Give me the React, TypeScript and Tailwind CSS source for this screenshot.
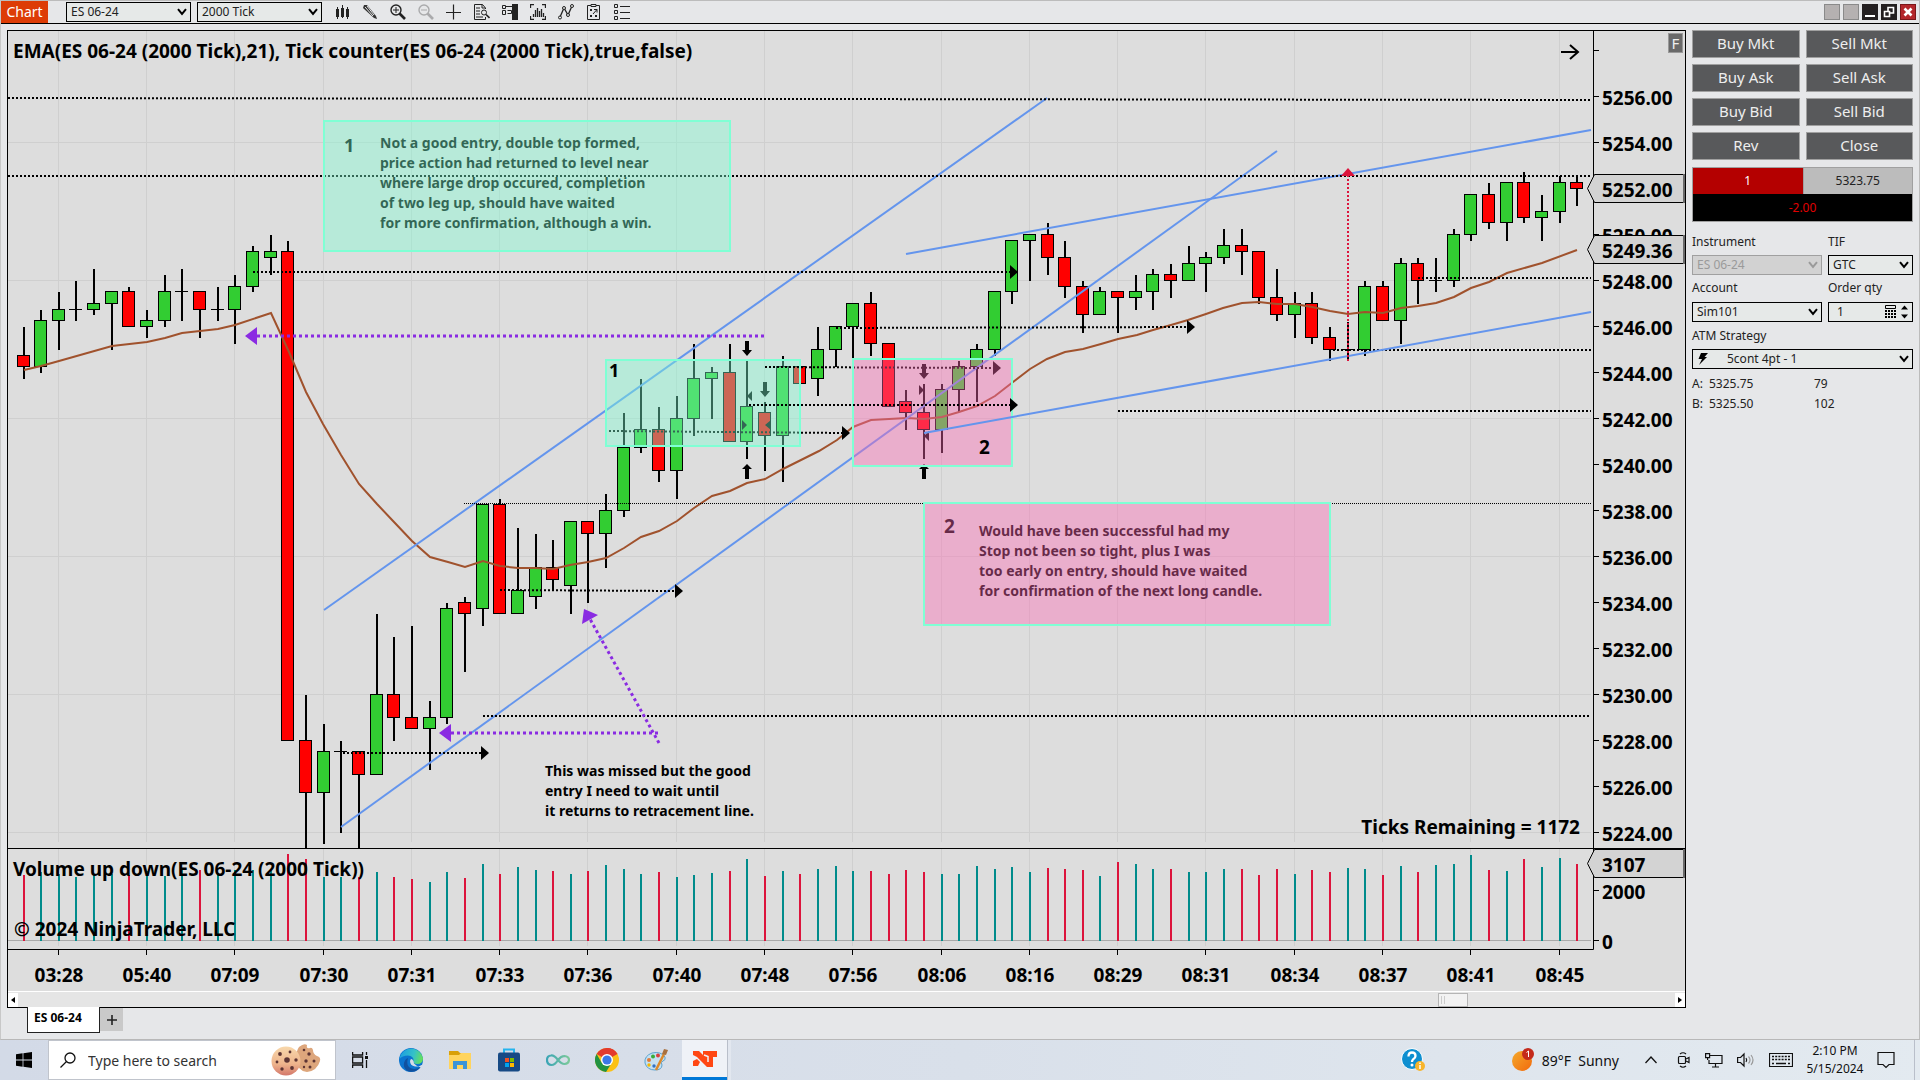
import React from "react";

type Candle = ["g" | "r" | "d", number, number, number, number];

// kind, body top, body bottom, high, low
const CANDLES: Candle[] = [
  ["r", 355, 367, 327, 379], ["g", 320, 367, 310, 373], ["g", 309, 321, 292, 350], ["d", 309, 310, 281, 321],
  ["g", 303, 310, 269, 315], ["g", 291, 304, 291, 350], ["r", 291, 327, 287, 327], ["g", 320, 327, 310, 338],
  ["g", 291, 321, 275, 327], ["d", 291, 292, 269, 321], ["r", 291, 310, 291, 338], ["d", 309, 310, 287, 321],
  ["g", 286, 310, 275, 344], ["g", 251, 287, 246, 292], ["g", 251, 258, 235, 275], ["r", 251, 741, 241, 741],
  ["r", 740, 793, 695, 848], ["g", 751, 793, 724, 844], ["d", 751, 752, 741, 833], ["r", 751, 775, 751, 848],
  ["g", 694, 775, 614, 775], ["r", 694, 718, 637, 741], ["r", 717, 729, 626, 729], ["g", 717, 729, 701, 770],
  ["g", 608, 718, 603, 724], ["r", 602, 614, 597, 672], ["g", 504, 609, 504, 626], ["r", 504, 614, 499, 614],
  ["g", 590, 614, 528, 614], ["g", 567, 597, 534, 609], ["r", 567, 580, 540, 591], ["g", 521, 586, 521, 614],
  ["r", 521, 534, 521, 603], ["g", 510, 534, 494, 568], ["g", 447, 511, 413, 517], ["g", 429, 448, 379, 453],
  ["r", 429, 471, 407, 482], ["g", 418, 471, 396, 499], ["g", 378, 419, 344, 436], ["g", 372, 379, 367, 419],
  ["r", 372, 442, 344, 442], ["g", 406, 442, 361, 459], ["r", 412, 436, 402, 471], ["g", 366, 436, 356, 482],
  ["r", 366, 384, 366, 384], ["g", 349, 379, 327, 396], ["g", 326, 350, 326, 367], ["g", 303, 327, 303, 358],
  ["r", 303, 344, 292, 356], ["r", 343, 407, 343, 407], ["r", 401, 413, 390, 430], ["r", 412, 430, 384, 459],
  ["g", 389, 430, 384, 453], ["g", 366, 390, 361, 412], ["g", 349, 367, 344, 402], ["g", 291, 350, 291, 356],
  ["g", 240, 292, 240, 304], ["g", 234, 241, 234, 281], ["r", 234, 258, 223, 275], ["r", 257, 287, 241, 298],
  ["r", 286, 315, 281, 333], ["g", 291, 315, 287, 315], ["r", 291, 298, 291, 333], ["g", 291, 298, 275, 310],
  ["g", 274, 292, 269, 310], ["r", 274, 281, 264, 298], ["g", 263, 281, 246, 281], ["g", 257, 264, 252, 292],
  ["g", 245, 258, 229, 264], ["r", 245, 252, 229, 275], ["r", 251, 298, 251, 304], ["r", 297, 315, 269, 321],
  ["g", 303, 315, 292, 338], ["r", 303, 338, 292, 344], ["r", 337, 350, 327, 361], ["d", 349, 350, 322, 361],
  ["g", 286, 350, 281, 356], ["r", 286, 321, 281, 321], ["g", 263, 321, 258, 344], ["r", 263, 281, 258, 304],
  ["d", 280, 281, 258, 292], ["g", 234, 281, 229, 287], ["g", 194, 235, 194, 241], ["r", 194, 223, 183, 229],
  ["g", 182, 223, 182, 241], ["r", 182, 218, 172, 223], ["g", 211, 218, 195, 241], ["g", 182, 212, 176, 223],
  ["r", 182, 189, 177, 206],
];

const VOLUME_DOWN = new Set([
  0, 6, 10, 15, 16, 19, 21, 22, 25, 27, 30, 32, 36, 40, 42, 44, 48, 49, 50, 51, 58, 59, 60, 62, 65, 69, 70, 71, 73, 74,
  77, 79, 83, 85, 88,
]);
const VOLUME = [
  875, 872, 874, 877, 874, 874, 875, 871, 876, 870, 870, 873, 870, 870, 870, 854, 859, 877, 877, 877, 872, 877, 879,
  882, 872, 878, 864, 874, 867, 870, 871, 874, 871, 865, 869, 874, 872, 877, 875, 873, 871, 859, 876, 871, 874, 869,
  866, 871, 871, 874, 870, 872, 874, 874, 866, 869, 867, 872, 868, 869, 870, 876, 862, 864, 869, 869, 872, 872, 869,
  869, 875, 869, 874, 870, 872, 868, 869, 875, 866, 872, 865, 864, 855, 870, 871, 859, 867, 858, 864,
];

const EMA =
  "24,370 41,366 59,361 112,346 147,342 165,338 182,333 200,331 218,329 235,325 271,313 289,352 306,392 323,424 341,455 359,484 377,504 394,522 412,541 430,557 448,562 465,567 483,561 500,566 518,568 535,568 553,569 570,565 588,562 606,558 624,548 641,537 659,531 677,521 694,508 712,496 730,491 747,483 765,479 783,469 801,460 819,451 837,440 853,427 871,420 889,419 907,418 924,419 942,417 959,412 977,406 995,396 1013,382 1030,369 1047,359 1065,352 1083,349 1101,344 1118,339 1137,335 1153,330 1171,325 1188,320 1206,314 1223,308 1242,303 1259,302 1277,304 1295,304 1312,307 1330,311 1348,314 1365,312 1383,313 1401,308 1418,306 1436,303 1454,297 1471,288 1489,282 1507,273 1542,263 1577,250";

const TIMES = [
  "03:28", "05:40", "07:09", "07:30", "07:31", "07:33", "07:36", "07:40", "07:48", "07:56", "08:06", "08:16", "08:29",
  "08:31", "08:34", "08:37", "08:41", "08:45",
];

const barX = (i: number) => Math.floor(58.33 + 17.655 * (i - 2));
const priceY = (p: number) => 96 + 23 * (5256 - p);
const PRICES = Array.from({ length: 17 }, (_, k) => 5256 - 2 * k);

function Dotted({ x1, y1, x2, y2, arrow = false }: { x1: number; y1: number; x2: number; y2: number; arrow?: boolean }) {
  return (
    <g>
      <line x1={x1} y1={y1} x2={arrow ? x2 - 8 : x2} y2={y2} stroke="#000" strokeWidth="2" strokeDasharray="2 2" />
      {arrow && <polygon points={`${x2 - 8},${y2 - 7} ${x2},${y2} ${x2 - 8},${y2 + 7}`} />}
    </g>
  );
}

function TextLines({ x, y, lines, fill = "#000" }: { x: number; y: number; lines: string[]; fill?: string }) {
  return (
    <text fill={fill} className="text-[14px]">
      {lines.map((l, k) => (
        <tspan key={l} x={x} y={y + k * 20}>
          {l}
        </tspan>
      ))}
    </text>
  );
}

function AxisMarker({ y, label }: { y: number; label: string }) {
  return (
    <g>
      <path d={`M1594.5 ${y + 0.5}H1684V${y + 28.5}H1594.5L1587.5 ${y + 14.5}Z`} fill="#d3d3d3" stroke="#000" />
      <path d={`M1684 ${y}V${y + 29}`} stroke="#696969" strokeWidth="2" />
      <text x="1602" y={y + 23}>
        {label}
      </text>
    </g>
  );
}

function DownArrow({ x, y }: { x: number; y: number }) {
  return <path d={`M${x - 2} ${y}h4v9h3l-5 6l-5 -6h3z`} />;
}
function UpArrow({ x, y }: { x: number; y: number }) {
  return <path d={`M${x} ${y}l5 5h-3v10h-4v-10h-3z`} />;
}

function PriceChart() {
  return (
    <svg
      viewBox="8 31 1677 960"
      className="block h-auto w-full bg-[#dddddd] font-['Noto_Sans','Open_Sans',sans-serif] text-[19px] font-bold"
      role="img"
      aria-label="ES 06-24 2000 tick price chart"
    >
      {/* grid */}
      <g stroke="#cfcfcf">
        {[142, 280, 418, 556, 694, 832].map((y) => (
          <path key={y} d={`M8 ${y + 0.5}H1591`} />
        ))}
        {TIMES.map((t, k) => (
          <path key={t} d={`M${barX(2 + 5 * k) + 0.5} 31V842M${barX(2 + 5 * k) + 0.5} 849V946`} />
        ))}
      </g>
      <path d="M8 940.5H1591" stroke="#a9a9a9" />

      {/* volume bars */}
      {VOLUME.map((y, i) => (
        <rect key={i} x={barX(i)} y={y} width="2" height={941 - y} fill={VOLUME_DOWN.has(i) ? "#dc143c" : "#008b8b"} />
      ))}

      {/* candles */}
      {CANDLES.map(([k, top, bottom, high, low], i) => {
        const x = barX(i);
        return (
          <g key={i}>
            <rect x={x} y={high} width="2" height={low - high} />
            {k === "d" ? (
              <rect x={x - 6} y={top} width="13" height="1" />
            ) : (
              <rect
                x={x - 5.5}
                y={top + 0.5}
                width="12"
                height={bottom - top - 1}
                fill={k === "g" ? "#32cd32" : "#ff0000"}
                stroke="#000"
              />
            )}
          </g>
        );
      })}
      <polyline points={EMA} fill="none" stroke="#a0522d" strokeWidth="2" />

      {/* trend channels below the shaded zones */}
      <g stroke="#6495ed" strokeWidth="2">
        <path d="M324 610L1047 98" />
        <path d="M341 827L1277 151" />
        <path d="M906 254L1591 130" />
      </g>

      <Dotted x1={8} y1={98} x2={1591} y2={100} />
      <Dotted x1={8} y1={176} x2={1591} y2={176} />
      <Dotted x1={253} y1={272} x2={1018} y2={272} arrow />
      <Dotted x1={836} y1={328} x2={1195} y2={327} arrow />
      <Dotted x1={765} y1={367} x2={1001} y2={368} arrow />
      <Dotted x1={609} y1={431} x2={850} y2={433} arrow />
      <Dotted x1={500} y1={590} x2={683} y2={591} arrow />
      <Dotted x1={483} y1={716} x2={1591} y2={716} />
      <Dotted x1={343} y1={753} x2={489} y2={753} arrow />
      <Dotted x1={1418} y1={278} x2={1591} y2={278} />
      <Dotted x1={1333} y1={350} x2={1591} y2={350} />
      <Dotted x1={1118} y1={411} x2={1591} y2={411} />
      <path d="M464 503.5H1591" stroke="#000" strokeDasharray="1 1" />

      {/* order fills */}
      <DownArrow x={747} y={341} />
      <DownArrow x={765} y={382} />
      <DownArrow x={924} y={364} />
      <UpArrow x={747} y={464} />
      <UpArrow x={924} y={464} />
      <path d="M752 391v10l-5 -5zM742 420v10l5 -5zM771 420v10l-6 -5zM919 385v10l5 -5zM929 431v10l-5 -5z" />

      {/* notes */}
      <TextLines
        x={380}
        y={148}
        lines={[
          "Not a good entry, double top formed,",
          "price action had returned to level near",
          "where large drop occured, completion",
          "of two leg up, should have waited",
          "for more confirmation, although a win.",
        ]}
      />
      <text x="344" y="152" className="text-[18px]">1</text>
      <TextLines
        x={979}
        y={536}
        lines={[
          "Would have been successful had my",
          "Stop not been so tight, plus I was",
          "too early on entry, should have waited",
          "for confirmation of the next long candle.",
        ]}
      />
      <text x="944" y="533">2</text>
      <TextLines
        x={545}
        y={776}
        lines={["This was missed but the good", "entry I need to wait until", "it returns to retracement line."]}
      />
      <g stroke="#7fffd4" strokeWidth="2" fillOpacity="0.4">
        <rect x="324" y="121" width="406" height="130" fill="#7fffd4" />
        <rect x="606" y="360" width="194" height="86" fill="#7fffd4" />
        <rect x="853" y="359" width="159" height="107" fill="#ff69b4" />
        <rect x="924" y="503" width="406" height="122" fill="#ff69b4" />
      </g>
      <Dotted x1={749} y1={405} x2={1018} y2={405} arrow />
      <path d="M765 367H800" stroke="#000" strokeWidth="2" strokeDasharray="2 2" />
      <path d="M924 433L1591 312" stroke="#6495ed" strokeWidth="2" />
      <text x="609" y="377" className="text-[18px]">1</text>
      <text x="979" y="454">2</text>

      {/* hand-drawn markers */}
      <g stroke="#8a2be2" strokeWidth="3" strokeDasharray="3 3">
        <path d="M764 336H257" />
        <path d="M658 733H451" />
        <path d="M659 743L590 619" />
      </g>
      <g fill="#8a2be2">
        <polygon points="245,336 257,327 257,345" />
        <polygon points="439,733 451,724 451,742" />
        <polygon points="584,609 598,615 582,624" />
      </g>
      <path d="M1348 361V176" stroke="#dc143c" strokeWidth="2" strokeDasharray="2 2" />
      <polygon points="1341,176 1348,168 1355,176" fill="#dc143c" />

      {/* frames and axes */}
      <path d="M1593.5 31V949.5H8M8 848.5H1685" fill="none" stroke="#000" />
      <path
        d={
          "M1594 50.5h5M1594 890.5h5M1594 940.5h5" +
          PRICES.map((p) => `M1594 ${priceY(p) + 0.5}h5`).join("") +
          TIMES.map((_, k) => `M${barX(2 + 5 * k) + 0.5} 950v5`).join("")
        }
        stroke="#000"
      />
      {PRICES.filter((p) => p !== 5252).map((p) => (
        <text key={p} x="1602" y={priceY(p) + 9}>
          {p.toFixed(2)}
        </text>
      ))}
      <text x="1602" y="899">2000</text>
      <text x="1602" y="949">0</text>
      <AxisMarker y={174} label="5252.00" />
      <AxisMarker y={235} label="5249.36" />
      <AxisMarker y={849} label="3107" />
      <g textAnchor="middle">
        {TIMES.map((t, k) => (
          <text key={t} x={barX(2 + 5 * k) + 1} y="982">
            {t}
          </text>
        ))}
      </g>

      <text x="13" y="58">EMA(ES 06-24 (2000 Tick),21), Tick counter(ES 06-24 (2000 Tick),true,false)</text>
      <text x="13" y="876">Volume up down(ES 06-24 (2000 Tick))</text>
      <text x="14" y="936">© 2024 NinjaTrader, LLC</text>
      <text x="1580" y="834" textAnchor="end">Ticks Remaining = 1172</text>
      <path d="M1561 52H1577M1570 45L1578 52L1570 59" fill="none" stroke="#000" strokeWidth="2" />
      <rect x="1668.5" y="33.5" width="14" height="19" fill="#696969" stroke="#999" />
      <text x="1675.5" y="49" textAnchor="middle" fill="#eee" className="text-[15px] font-normal">F</text>
    </svg>
  );
}

function Chevron({ color = "#000" }: { color?: string }) {
  return (
    <svg viewBox="0 0 10 8" className="pointer-events-none absolute right-1 top-1/2 h-2 w-2.5 -translate-y-1/2" aria-hidden>
      <path d="M1 1.2L5 6L9 1.2" fill="none" stroke={color} strokeWidth="2" />
    </svg>
  );
}

function Select({ id, value, label, disabled = false, inset = "pl-1" }: { id: string; value: string; label?: string; disabled?: boolean; inset?: string }) {
  return (
    <div className="relative w-full">
      <select
        id={id}
        aria-label={label}
        disabled={disabled}
        className={`block w-full appearance-none rounded-none border text-[12px] leading-[18px] ${inset} ${
          disabled ? "border-[#a0a0a0] bg-[#d2d2d2] text-[#9a9a9a] opacity-100" : "border-black bg-[#e6e9e8] text-[#222]"
        }`}
      >
        <option>{value}</option>
      </select>
      <Chevron color={disabled ? "#9a9a9a" : "#000"} />
    </div>
  );
}

const TOOLS: { name: string; art: React.ReactNode; dim?: boolean }[] = [
  { name: "Chart style", art: <path d="M3.5 3v12M8.5 1v13M13.5 3v12" stroke="#222" strokeWidth="1" fill="none" /> },
  { name: "Drawing tools", art: <><path d="M2 1L5 1L14 12L15 15L12 14L1 4Z" fill="#333" /><path d="M3 3L11 12M5 2L12 11" stroke="#e6e7e8" /></> },
  { name: "Zoom in", art: <><circle cx="6" cy="6" r="5" fill="none" stroke="#222" strokeWidth="1.4" /><path d="M3 6h6M6 3v6" stroke="#222" /><path d="M9.5 9.5L15 15" stroke="#222" strokeWidth="2.6" /></> },
  { name: "Zoom out", dim: true, art: <><circle cx="6" cy="6" r="5" fill="none" stroke="#222" strokeWidth="1.4" /><path d="M3 6h6" stroke="#222" /><path d="M9.5 9.5L15 15" stroke="#222" strokeWidth="2.6" /></> },
  { name: "Cross hair", art: <path d="M7.5 0.5v15M0 8.5h15" stroke="#222" strokeWidth="1.2" /> },
  { name: "Data box", art: <><path d="M11.5 5V4L8.5 0.5H0.5V15.5H11.5V13M8 0.5V4H11" fill="none" stroke="#222" /><path d="M2 4h4M2 7h4M2 10h4M2 13h7" stroke="#222" /><circle cx="10" cy="8.5" r="2.5" fill="none" stroke="#222" /><path d="M12 10.5L15.5 14" stroke="#222" strokeWidth="1.6" /></> },
  { name: "Chart trader", art: <><path d="M10 0h6v16h-6z" fill="#222" /><path d="M0.5 1.5h3v3h-3zM4 2.5h6M5.5 6.5h4v3h-4M0.5 6.5h3v4h-3z" fill="none" stroke="#222" /></> },
  { name: "Indicators", art: <path d="M4 0.5H0.5V4M12 0.5H15.5V4M0.5 12V15.5H4M15.5 12V15.5H12M3.5 13V10M5.5 13V6M7.5 13V4M9.5 13V7M11.5 13V5M13.5 13V9" fill="none" stroke="#222" strokeWidth="1.3" /> },
  { name: "Strategies", art: <><path d="M2 13L6 4L10 11L14 2" fill="none" stroke="#222" strokeWidth="1.3" /><g fill="#e6e7e8" stroke="#222"><circle cx="2" cy="13.5" r="1.5" /><circle cx="6" cy="4" r="1.5" /><circle cx="10" cy="11" r="1.5" /><circle cx="14" cy="2" r="1.5" /></g></> },
  { name: "Properties", art: <><path d="M1.5 1.5h12v14h-12z" fill="none" stroke="#222" /><path d="M5 0.5h5v2H5z" fill="#e6e7e8" stroke="#222" /><path d="M4 5l2 2M6 5l-2 2M8 5.5h3v3M11 5.5L7 10M4 11l2 2M6 11l-2 2M9 11l2 2M11 11l-2 2" fill="none" stroke="#222" /></> },
  { name: "List", art: <><path d="M0.5 0.5h3v3h-3zM0.5 6.5h3v3h-3zM0.5 12.5h3v3h-3z" fill="none" stroke="#222" /><path d="M6 2.5h10M6 8.5h10M6 14.5h10" stroke="#222" /></> },
];

function Toolbar() {
  return (
    <header className="flex h-[23px] items-center border-b border-black">
      <button className="h-[22px] w-[47px] bg-[#dd3c06] text-[14px] leading-[20px] text-white">Chart</button>
      <div className="ml-[18px] w-[125px]">
        <Select id="bar-instrument" label="Chart instrument" value="ES 06-24" />
      </div>
      <div className="ml-1.5 w-[125px]">
        <Select id="bar-interval" label="Interval" value="2000 Tick" />
      </div>
      <div className="ml-3 flex gap-3">
        {TOOLS.map((t, i) => (
          <button key={t.name} aria-label={t.name} className={t.dim ? "opacity-30" : ""}>
            <svg viewBox="0 0 16 16" className="h-4 w-4">
              {t.art}
              {i === 0 && <path d="M2 5h3v8H2zM7 4h3v9H7zM12 5h3v8h-3z" fill="#222" />}
            </svg>
          </button>
        ))}
      </div>
      <div className="ml-auto mr-[3px] flex gap-[3px]">
        <button aria-label="Link instrument" className="h-4 w-4 border border-[#8a8a8a] bg-[#b5b1b1]" />
        <button aria-label="Link interval" className="h-4 w-4 border border-[#8a8a8a] bg-[#b5b1b1]" />
        <button aria-label="Minimize" className="h-4 w-4 bg-[#231f20]">
          <svg viewBox="0 0 16 16"><path d="M3 12h10" stroke="#fff" strokeWidth="2" /></svg>
        </button>
        <button aria-label="Restore" className="h-4 w-4 bg-[#231f20]">
          <svg viewBox="0 0 16 16"><path d="M3.5 7.5h5v5h-5zM7 7V3.5h5.5V9H9" fill="none" stroke="#fff" strokeWidth="1.6" /></svg>
        </button>
        <button aria-label="Close window" className="h-4 w-4 border border-[#7a1518] bg-[#b3262b]">
          <svg viewBox="0 0 14 14"><path d="M3.5 3.5l7 7M10.5 3.5l-7 7" stroke="#fff" strokeWidth="2.6" /></svg>
        </button>
      </div>
    </header>
  );
}

function TraderPanel() {
  return (
    <aside className="w-[221px] shrink-0 text-[12px] leading-4 text-[#222]">
      <div className="grid grid-cols-2 gap-1.5">
        {["Buy Mkt", "Sell Mkt", "Buy Ask", "Sell Ask", "Buy Bid", "Sell Bid", "Rev", "Close"].map((b) => (
          <button key={b} className="h-7 border border-[#a0a0a0] bg-[#58595b] pb-0.5 text-[15px] leading-6 text-[#eee]">
            {b}
          </button>
        ))}
      </div>
      <div className="mt-[7px] border border-[#a0a0a0] text-center">
        <div className="grid grid-cols-2 leading-[26px]">
          <div className="bg-[#b40000] text-white">1</div>
          <div className="border-l border-[#a0a0a0] bg-[#bcbcbc]">5323.75</div>
        </div>
        <div className="bg-black leading-[27px] text-[#e00000]">-2.00</div>
      </div>
      <form className="mt-3 grid grid-cols-[130px_1fr] gap-x-1.5">
        <label htmlFor="instrument" className="mb-[5px]">Instrument</label>
        <label htmlFor="tif" className="mb-[5px]">TIF</label>
        <Select id="instrument" value="ES 06-24" disabled />
        <Select id="tif" value="GTC" />
        <label htmlFor="account" className="mb-1.5 mt-[5px]">Account</label>
        <label htmlFor="qty" className="mb-1.5 mt-[5px]">Order qty</label>
        <Select id="account" value="Sim101" />
        <div className="relative">
          <input id="qty" defaultValue="1" className="block w-full rounded-none border border-black bg-[#e6e9e8] pl-2 text-[12px] leading-[18px]" />
          <svg viewBox="0 0 24 14" className="absolute right-1 top-[3px] h-3.5 w-6" aria-hidden>
            <path d="M0.5 0.5h10v3h-10z" fill="none" stroke="#000" />
            <path d="M0 6h11M0 9h11M0 12h11" stroke="#000" strokeWidth="2" strokeDasharray="2 1" />
            <path d="M16 4.5l3.5 -4l3.5 4zM16 9.5l3.5 4l3.5 -4z" />
          </svg>
        </div>
        <label htmlFor="atm" className="col-span-2 mb-[5px] mt-1.5">ATM Strategy</label>
        <div className="relative col-span-2">
          <Select id="atm" value="5cont 4pt - 1" inset="pl-[34px]" />
          <svg viewBox="0 0 10 12" className="absolute left-1.5 top-1 h-3 w-2.5" aria-hidden>
            <path d="M3 0H10L6.5 4H9L1 12L4 6H0.5Z" />
          </svg>
        </div>
      </form>
      <dl className="mt-[5px] grid grid-cols-[17px_105px_1fr] leading-5">
        <dt>A:</dt><dd>5325.75</dd><dd>79</dd>
        <dt>B:</dt><dd>5325.50</dd><dd>102</dd>
      </dl>
    </aside>
  );
}

function ScrollBar() {
  return (
    <div className="flex h-4 items-center justify-between border-t border-white bg-[#e5e5e5]">
      <button aria-label="Scroll left" className="flex h-3.5 w-2.5 items-center justify-center bg-white">
        <svg viewBox="0 0 4 6" className="h-1.5 w-1"><path d="M4 0v6L0 3z" /></svg>
      </button>
      <div className="ml-auto mr-[207px] h-3.5 w-[30px] border border-[#b5b5b5] bg-[#f2f2f2] pl-0.5">
        <div className="mt-0.5 h-2 w-1 border-x border-[#ccc]" />
      </div>
      <button aria-label="Scroll right" className="flex h-3.5 w-2.5 items-center justify-center bg-white">
        <svg viewBox="0 0 4 6" className="h-1.5 w-1"><path d="M0 0v6L4 3z" /></svg>
      </button>
    </div>
  );
}

function Cookies() {
  return (
    <svg viewBox="0 0 50 34" className="ml-auto mr-3.5 h-[34px] w-[50px]" aria-hidden>
      <defs>
        <linearGradient id="dough" x1="0" y1="0" x2="0" y2="1">
          <stop offset="0" stopColor="#f8d8ac" />
          <stop offset="0.6" stopColor="#eeb48c" />
          <stop offset="1" stopColor="#d3776b" />
        </linearGradient>
      </defs>
      <path d="M28 4Q33 0 36 2Q35 6 39 5Q41 4 42 7Q42 11 46 13Q50 14 49 18Q46 28 36 29Q26 28 25 16Q25 8 28 4Z" fill="#dda67c" />
      <g fill="#5c3434"><circle cx="33" cy="7" r="1.3" /><circle cx="38" cy="11" r="1.7" /><circle cx="35" cy="18" r="1.7" /><circle cx="43" cy="18" r="1.5" /><circle cx="39" cy="24" r="1.5" /><circle cx="33" cy="24" r="1.2" /></g>
      <circle cx="15" cy="18" r="14.5" fill="url(#dough)" />
      <g fill="#5c3434"><circle cx="9" cy="11" r="1.9" /><circle cx="19" cy="9" r="1.4" /><circle cx="16" cy="17" r="2.8" /><circle cx="25" cy="17" r="1.7" /><circle cx="6" cy="19" r="1.4" /><circle cx="11" cy="26" r="1.7" /><circle cx="21" cy="25" r="1.9" /></g>
    </svg>
  );
}

const APPS: { name: string; art: React.ReactNode }[] = [
  {
    name: "Microsoft Edge",
    art: (
      <>
        <defs>
          <linearGradient id="edge-top" x1="0" y1="0.3" x2="1" y2="0.5"><stop offset="0" stopColor="#1b9de2" /><stop offset="0.6" stopColor="#35c1c8" /><stop offset="1" stopColor="#66e05a" /></linearGradient>
        </defs>
        <circle cx="12" cy="12" r="12" fill="#0b74cf" />
        <path d="M0.5 10A12 12 0 0 1 24 10Q24 16 18 16Q14 16 14.5 13Q15 8 9 7.5Q3 7.5 0.5 11Z" fill="url(#edge-top)" />
        <path d="M9 10Q6 20 15 21Q19 21.5 22 18Q18 25 10 23.5Q4 21 5 15Q6 11 9 10Z" fill="#10519f" />
        <path d="M14.5 13Q12 9 11 13Q11 17.5 16 18.5Q20 19 22.5 17L24 17L23 20Q18 19 15 15.5Z" fill="#d5dce8" />
      </>
    ),
  },
  {
    name: "File Explorer",
    art: (
      <>
        <path d="M1 3h9l2 2h10v6H1z" fill="#d9a009" />
        <path d="M1 7h10l2-2h10v16H1z" fill="#ffd45e" />
        <path d="M5 13h14v8h-4v-4H9v4H5z" fill="#3c94d8" />
      </>
    ),
  },
  {
    name: "Microsoft Store",
    art: (
      <>
        <path d="M7 5V1.5h10V5" fill="none" stroke="#24b4ee" strokeWidth="2" />
        <rect x="1" y="4.5" width="22" height="19" rx="2" fill="#174a85" />
        <path d="M8 10h4v4H8z" fill="#f25022" /><path d="M13 10h4v4h-4z" fill="#7fba00" />
        <path d="M8 15h4v4H8z" fill="#00a4ef" /><path d="M13 15h4v4h-4z" fill="#ffb900" />
      </>
    ),
  },
  {
    name: "Loop",
    art: (
      <>
        <defs><linearGradient id="loop"><stop offset="0" stopColor="#3aa5b5" /><stop offset="1" stopColor="#7cc99a" /></linearGradient></defs>
        <path d="M12 12Q8 7 5 7.5Q1 8 1 12Q1 16.5 5.5 17Q9 17 12 12Q15 8 18.5 8Q23 8.5 23 12Q22.5 16 18.5 16Q15.5 16 12 12Z" fill="none" stroke="url(#loop)" strokeWidth="2.2" />
      </>
    ),
  },
  {
    name: "Google Chrome",
    art: (
      <>
        <circle cx="12" cy="12" r="12" fill="#fbc116" />
        <path d="M12 12L1.6 6A12 12 0 0 1 22.4 6Z" fill="#e33b2e" />
        <path d="M12 0A12 12 0 0 1 22.4 6H12Z" fill="#e33b2e" />
        <path d="M1.6 6A12 12 0 0 0 11 24L17 14.5L12 12L6.5 14.5Z" fill="#229342" />
        <circle cx="12" cy="12" r="6" fill="#fff" /><circle cx="12" cy="12" r="4.6" fill="#3b78e7" />
      </>
    ),
  },
  {
    name: "Paint",
    art: (
      <>
        <path d="M1 15Q0 8 8 5Q17 3 21 9Q22 12 19 13Q16 14 18 17Q18 22 11 22Q3 22 1 15Z" fill="#c4e0f2" stroke="#5aa3cf" />
        <circle cx="5" cy="12" r="2" fill="#e07a3a" /><circle cx="9" cy="8.5" r="2" fill="#3aab3a" /><circle cx="14" cy="7.5" r="2" fill="#d94040" /><circle cx="5" cy="17" r="1.7" fill="#f5b800" /><circle cx="10" cy="18" r="1.7" fill="#3273c4" />
        <path d="M12 22L20 6" stroke="#dc8a2c" strokeWidth="2.5" /><path d="M18 6L20 1L24 2L22 7Z" fill="#a9713e" />
      </>
    ),
  },
];

function Taskbar() {
  return (
    <footer className="flex h-10 items-stretch bg-linear-to-r from-[#d3dae7] via-[#d9e0ea] to-[#e3eaf0] text-[#111]">
      <button aria-label="Start" className="flex w-12 items-center justify-center">
        <svg viewBox="0 0 16 16" className="h-4 w-4"><path d="M0 2.3L6.6 1.3V7.6H0zM7.4 1.2L16 0V7.6H7.4zM0 8.4H6.6V14.7L0 13.7zM7.4 8.4H16V16L7.4 14.8z" /></svg>
      </button>
      <label className="flex w-72 items-center border border-[#c0c4cc] bg-white pl-[11px]">
        <svg viewBox="0 0 16 16" className="h-4 w-4" aria-hidden><circle cx="10" cy="6" r="5" fill="none" stroke="#111" strokeWidth="1.3" /><path d="M6.5 9.5L0.5 15.5" stroke="#111" strokeWidth="1.3" /></svg>
        <input aria-label="Search" placeholder="Type here to search" className="ml-3 w-36 text-[14px] outline-none placeholder:text-[#333]" />
        <Cookies />
      </label>
      <button aria-label="Task view" className="flex w-12 items-center justify-center">
        <svg viewBox="0 0 16 16" className="h-4 w-4" fill="none" stroke="#111" strokeWidth="1.3"><path d="M0.6 0v3h10V0M0.6 16v-3h10v3M0.6 5h10v6h-10zM14.5 0v3M14.5 8v8" /><path d="M13 4h3v3h-3z" fill="#111" stroke="none" /></svg>
      </button>
      <div className="ml-0.5 flex">
        {APPS.map((a) => (
          <button key={a.name} aria-label={a.name} className="ml-px flex w-12 items-center justify-center">
            <svg viewBox="0 0 24 24" className="h-6 w-6">{a.art}</svg>
          </button>
        ))}
      </div>
      <button aria-label="NinjaTrader" className="ml-0.5 flex w-[45px] items-center justify-center border-b-[3px] border-[#0078d7] bg-[#eff2f7]">
        <svg viewBox="0 0 24 16" className="h-4 w-6" fill="#ff4713">
          <path d="M0 0H6L10 4V0H24V6H20V16H14L4 6L0 4Z" />
          <path d="M0 15V10L4 8L7 11L5 15Z" />
          <path d="M11 4L15 5.5V11" fill="none" stroke="#eff2f7" strokeWidth="1.5" />
        </svg>
      </button>
      <div className="w-1 border-l border-[#b9bfca] bg-[#e2e7ef]" />

      <div className="ml-auto flex items-center text-[14px]">
        <button aria-label="Help" className="mr-[87px]">
          <svg viewBox="0 0 24 24" className="h-6 w-6">
            <circle cx="11" cy="11" r="10.5" fill="#0e8fd0" stroke="#fff" />
            <path d="M7.5 8.5Q7.5 4.5 11 4.5Q14.5 4.5 14.5 8Q14.5 10 12 11.5Q11 12.5 11 14" fill="none" stroke="#fff" strokeWidth="2.3" /><circle cx="11" cy="17" r="1.5" fill="#fff" />
            <circle cx="19" cy="18" r="5" fill="#f7b52c" /><path d="M19 17v4M19 14.5v1.5" stroke="#fff" strokeWidth="1.5" />
          </svg>
        </button>
        <button className="flex items-center">
          <svg viewBox="0 0 24 24" className="mr-1.5 h-6 w-6" aria-hidden>
            <defs><linearGradient id="sun" x1="0" y1="0" x2="1" y2="1"><stop offset="0" stopColor="#f4a92c" /><stop offset="1" stopColor="#f26a0c" /></linearGradient></defs>
            <circle cx="10" cy="13" r="10" fill="url(#sun)" /><circle cx="16" cy="6" r="6" fill="#c42b1c" /><path d="M14.5 4.5L16.5 3V9" fill="none" stroke="#fff" />
          </svg>
          89°F&nbsp; Sunny
        </button>
        <button aria-label="Show hidden icons" className="ml-[26px]">
          <svg viewBox="0 0 12 8" className="h-2 w-3"><path d="M0.5 7L6 1L11.5 7" fill="none" stroke="#111" strokeWidth="1.3" /></svg>
        </button>
        <button aria-label="Meet now" className="ml-5">
          <svg viewBox="0 0 14 16" className="h-4 w-3.5" fill="none" stroke="#111" strokeWidth="1.2"><rect x="1.5" y="4.5" width="7" height="7" rx="1" /><path d="M9 7l3-1.5v5L9 9M3 2Q6 -0.5 9 2M3 14Q6 16.5 9 14" /></svg>
        </button>
        <button aria-label="Network" className="ml-3.5">
          <svg viewBox="0 0 18 16" className="h-4 w-[18px]" fill="none" stroke="#111" strokeWidth="1.2"><path d="M5 3.5h12v8H4V8M10.5 12v3M7 15h7M0.6 1.6h4v4h-4zM2.6 6v2" /></svg>
        </button>
        <button aria-label="Volume" className="ml-3.5">
          <svg viewBox="0 0 18 16" className="h-4 w-[18px]" fill="none" stroke="#111" strokeWidth="1.2"><path d="M0.6 5.5h3L7 2v12l-3.5-3.5H0.6z" /><path d="M9 6q1.5 2 0 4" /><path d="M11.5 4.5q3 3.5 0 7M14 3q4 5 0 10" stroke="#999" /></svg>
        </button>
        <button aria-label="Touch keyboard" className="ml-3.5">
          <svg viewBox="0 0 24 14" className="h-3.5 w-6" fill="none" stroke="#111"><path d="M0.5 0.5h23v13h-23z" strokeWidth="1.2" /><path d="M3 3.5h18M3 6.5h18" strokeDasharray="2 1.2" strokeWidth="1.3" /><path d="M3 10.5h2M7 10.5h10M19 10.5h2" strokeWidth="1.3" /></svg>
        </button>
        <button className="ml-3 w-[60px] text-center text-[12px] leading-[18px]">2:10 PM<br />5/15/2024</button>
        <button aria-label="Notifications" className="ml-3 mr-[19px]">
          <svg viewBox="0 0 18 18" className="h-[18px] w-[18px]" fill="none" stroke="#111" strokeWidth="1.2"><path d="M1 1.5h16v12h-5L9 16.5L6 13.5H1z" /></svg>
        </button>
      </div>
      <div className="w-1.5 border-l border-[#b9bfca]" />
    </footer>
  );
}

export default function App() {
  return (
    <div className="flex min-h-screen flex-col justify-between overflow-hidden bg-[#e6e7e9] font-['Noto_Sans','Open_Sans',sans-serif]">
      <div className="flex flex-1 flex-col border border-[#bcbcbc] border-l-[#c8c8c8] border-b-[#b8b8b8]">
        <Toolbar />
        <main className="flex gap-1.5 pl-1.5 pr-1.5 pt-1.5">
          <section className="min-w-0 flex-1">
            <div className="border border-black">
              <PriceChart />
              <ScrollBar />
            </div>
            <nav className="flex items-start pl-5">
              <button className="-mt-px h-[26px] w-[73px] border border-t-0 border-[#222] bg-white pb-1 pl-1.5 text-left text-[12px] font-bold leading-5">ES 06-24</button>
              <button aria-label="New tab" className="flex h-[23px] w-[23px] items-center justify-center bg-[#c9c9c9]">
                <svg viewBox="0 0 12 12" className="h-3 w-3"><path d="M6 1v10M1 6h10" stroke="#222" strokeWidth="1.6" /></svg>
              </button>
            </nav>
          </section>
          <TraderPanel />
        </main>
      </div>
      <Taskbar />
    </div>
  );
}
